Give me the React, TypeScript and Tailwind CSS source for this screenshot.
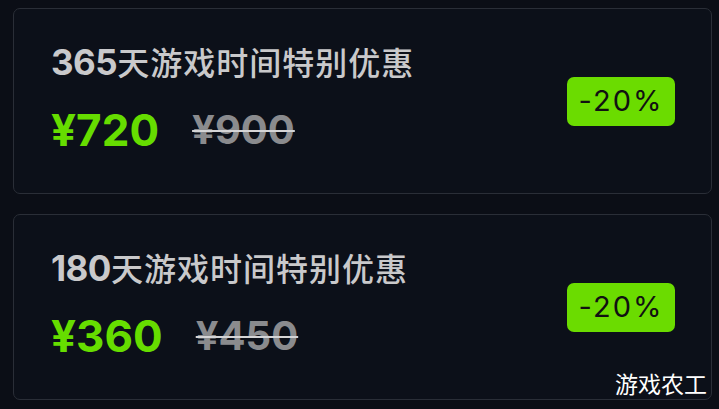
const plans = [
  { days: "365", price: "¥720", original: "¥900", off: "-20%" },
  { days: "180", price: "¥360", original: "¥450", off: "-20%" },
];

const PlanCard = ({ days, price, original, off }: (typeof plans)[number]) => (
  <div className="flex items-center justify-between rounded-[7px] border border-[#2a2e37] bg-[#0c1019] pl-[37px] pr-[36px] h-[186px]">
    <div className="flex flex-col mb-[6px]">
      <h2 className="text-[32px] leading-[36px] text-[#c9c9cb] font-medium tracking-[1px] [font-family:Inter,'Noto_Sans_CJK_SC',sans-serif]">
        <span className="font-bold text-[35px] tracking-[-0.5px]">{days}</span>天游戏时间特别优惠
      </h2>
      <div className="flex items-center gap-[33px] mt-[26px] text-[44px] leading-[44px] font-bold [font-family:Inter,sans-serif]">
        <span className="text-[#66dd00]">{price}</span>
        <span className="text-[40px] text-[#8a8b8e] line-through decoration-[#d4d4d6] decoration-[2px]">{original}</span>
      </div>
    </div>
    <div className="flex items-center justify-center w-[108px] h-[49px] rounded-[7px] bg-[#6bdc00] text-[#111] text-[29px] font-normal tracking-[2px] [font-family:Inter,sans-serif]">
      {off}
    </div>
  </div>
);

export default function App() {
  return (
    <div className="relative min-h-[409px] w-[719px] bg-[#0b0e16] pt-[8px] pl-[13px] pr-[7px]">
      <div className="flex flex-col gap-[20px]">
        {plans.map((p) => (
          <PlanCard key={p.days} {...p} />
        ))}
      </div>
      <div className="absolute right-[12px] bottom-[14px] text-white text-[23px] leading-none [font-family:'Noto_Sans_CJK_SC',sans-serif]">
        游戏农工
      </div>
    </div>
  );
}
